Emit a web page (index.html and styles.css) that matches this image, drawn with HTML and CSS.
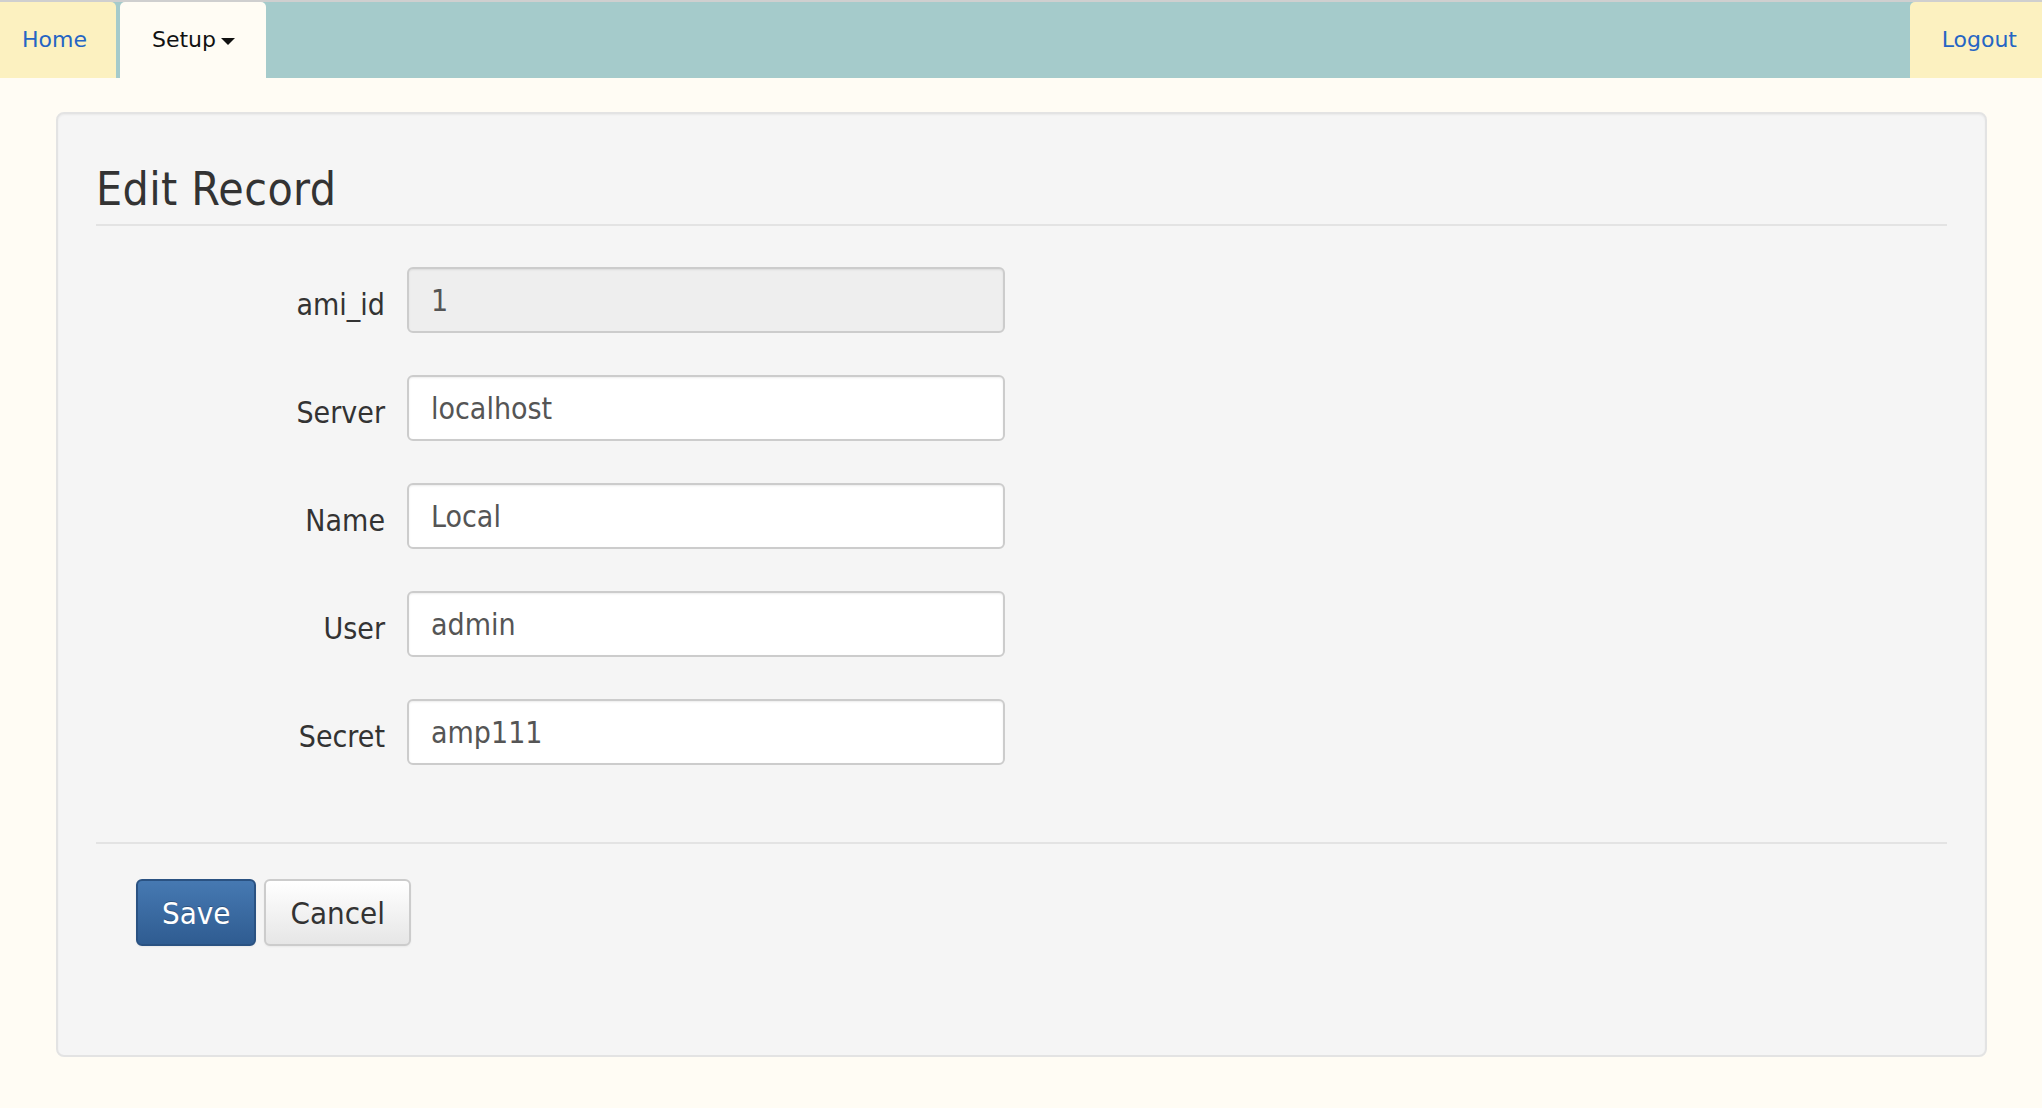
FILE: index.html
```html
<!DOCTYPE html>
<html lang="en">
<head>
    <meta charset="UTF-8">
    <meta name="viewport" content="width=device-width, initial-scale=1.0">
    <title>Edit Record</title>
    <link rel="stylesheet" href="styles.css">
</head>
<body>
    <!-- Top navigation tabs -->
    <nav class="topnav">
        <ul class="tabs">
            <li class="tab tab-home"><a href="#">Home</a></li>
            <li class="tab tab-active"><a href="#">Setup<span class="caret"></span></a></li>
        </ul>
        <ul class="tabs">
            <li class="tab tab-logout"><a href="#">Logout</a></li>
        </ul>
    </nav>

    <div class="container">
        <form class="well">
            <h1 class="legend">Edit Record</h1>

            <div class="fields">
                <div class="control-group">
                    <label for="amiId">ami_id</label>
                    <input type="text" id="amiId" class="disabled" value="1" disabled>
                </div>
                <div class="control-group">
                    <label for="server">Server</label>
                    <input type="text" id="server" value="localhost">
                </div>
                <div class="control-group">
                    <label for="name">Name</label>
                    <input type="text" id="name" value="Local">
                </div>
                <div class="control-group">
                    <label for="user">User</label>
                    <input type="text" id="user" value="admin">
                </div>
                <div class="control-group">
                    <label for="secret">Secret</label>
                    <input type="text" id="secret" value="amp111">
                </div>
            </div>

            <div class="form-actions">
                <button type="button" class="btn btn-primary">Save</button>
                <button type="button" class="btn">Cancel</button>
            </div>
        </form>
    </div>
</body>
</html>
```

FILE: styles.css
```css
body {
    margin: 0;
    background-color: #fffcf4;
    color: #333;
    font-family: "DejaVu Sans Condensed", "DejaVu Sans", sans-serif;
}

/* Top navigation */
.topnav {
    display: flex;
    justify-content: space-between;
    height: 76px;
    background-color: #a5cbcb;
    border-top: 2px solid #cfcfcf;
    font-family: "DejaVu Sans", sans-serif;
    font-size: 22px;
}

.tabs {
    display: flex;
    gap: 4px;
    margin: 0;
    padding: 0;
    list-style: none;
}

.tab {
    background-color: #fcf1c0;
    border-radius: 5px 5px 0 0;
}

.tab a {
    display: block;
    line-height: 76px;
    color: #2565c4;
    text-decoration: none;
}

.tab-home a {
    padding: 0 29px 0 22px;
}

.tab-home {
    border-top-left-radius: 0;
}

.tab-active {
    background-color: #fffcf4;
}

.tab-active a {
    padding: 0 31px 0 32px;
    color: #111;
}

.tab-logout a {
    padding: 0 25px 0 32px;
}

.tab-logout {
    border-top-right-radius: 0;
}

.caret {
    display: inline-block;
    margin-left: 5px;
    vertical-align: middle;
    border-top: 7px solid #111;
    border-left: 7px solid transparent;
    border-right: 7px solid transparent;
}

/* Panel */
.container {
    margin: 34px 55px 0 56px;
}

.well {
    margin: 0;
    padding: 38px;
    background-color: #f5f5f5;
    border: 2px solid #e3e3e3;
    border-radius: 8px;
    box-shadow: inset 0 1px 2px rgba(0, 0, 0, 0.05);
}

.legend {
    margin: 11px 0 0;
    padding-bottom: 9px;
    font-size: 46px;
    font-weight: normal;
    letter-spacing: 0.4px;
    line-height: 52px;
    color: #333;
    border-bottom: 2px solid #e3e3e3;
}

.fields {
    display: flex;
    flex-direction: column;
    gap: 42px;
    margin-top: 41px;
}

.control-group {
    display: flex;
    align-items: flex-start;
}

.control-group label {
    width: 289px;
    margin-right: 22px;
    padding-top: 21px;
    font-size: 30px;
    line-height: 34px;
    text-align: right;
    color: #333;
}

.control-group input {
    width: 598px;
    height: 66px;
    box-sizing: border-box;
    padding: 0 22px;
    font-family: inherit;
    font-size: 30px;
    color: #555;
    background-color: #fff;
    border: 2px solid #ccc;
    border-radius: 6px;
    box-shadow: inset 0 1px 2px rgba(0, 0, 0, 0.075);
}

.control-group input.disabled {
    background-color: #eee;
    color: #555;
    -webkit-text-fill-color: #555;
}

/* Buttons */
.form-actions {
    display: flex;
    gap: 8px;
    margin-top: 77px;
    padding: 35px 40px 71px;
    border-top: 2px solid #e3e3e3;
}

.btn {
    height: 67px;
    padding: 0 24px;
    font-family: inherit;
    font-size: 31px;
    color: #333;
    background-image: linear-gradient(#ffffff, #e6e6e6);
    border: 2px solid #ccc;
    border-radius: 6px;
    box-shadow: 0 1px 2px rgba(0, 0, 0, 0.05);
    cursor: pointer;
}

.btn-primary {
    color: #fff;
    background-image: linear-gradient(#4679b2, #2f5c91);
    border-color: #2a5282;
    text-shadow: 0 -1px 0 rgba(0, 0, 0, 0.25);
}
```
